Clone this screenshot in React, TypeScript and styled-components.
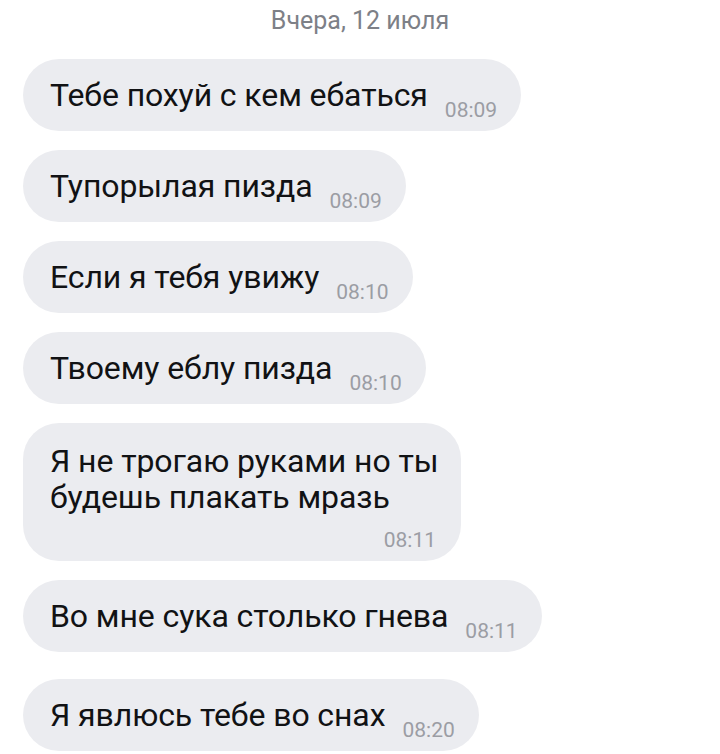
import React from 'react';
import styled, { createGlobalStyle } from 'styled-components';

type Message = {
    text: string
    time: string
    stacked?: boolean
    gapBefore?: number
}

const messages: Message[] = [
    { text: 'Тебе похуй с кем ебаться', time: '08:09' },
    { text: 'Тупорылая пизда', time: '08:09' },
    { text: 'Если я тебя увижу', time: '08:10' },
    { text: 'Твоему еблу пизда', time: '08:10' },
    { text: 'Я не трогаю руками но ты будешь плакать мразь', time: '08:11', stacked: true },
    { text: 'Во мне сука столько гнева', time: '08:11' },
    { text: 'Я явлюсь тебе во снах', time: '08:20', gapBefore: 27 },
];

const GlobalStyle = createGlobalStyle`
    html, body {
        margin: 0;
        padding: 0;
        background: #ffffff;
    }
    body {
        font-family: Roboto, "Noto Sans", sans-serif;
        -webkit-font-smoothing: antialiased;
    }
`

export default function App() {
    return (
        <>
            <GlobalStyle />
            <StyledChat>
                <DateLabel>Вчера, 12 июля</DateLabel>
                <StyledList>
                    {messages.map((m, i) => (
                        <Bubble key={i} $stacked={m.stacked} $gapBefore={m.gapBefore}>
                            <BubbleText $stacked={m.stacked}>{m.text}</BubbleText>
                            <Time $stacked={m.stacked}>{m.time}</Time>
                        </Bubble>
                    ))}
                </StyledList>
            </StyledChat>
        </>
    );
}

const StyledChat = styled.div`
    width: 720px;
    height: 754px;
    overflow: hidden;
    box-sizing: border-box;
    padding: 6px 0 0 23px;
    display: flex;
    flex-direction: column;
`

const DateLabel = styled.div`
    width: 674px;
    text-align: center;
    font-size: 25px;
    line-height: 30px;
    color: #7d8087;
    margin-bottom: 23px;
`

const StyledList = styled.div`
    display: flex;
    flex-direction: column;
    align-items: flex-start;
`

const Bubble = styled.div<{ $stacked?: boolean; $gapBefore?: number }>`
    box-sizing: border-box;
    display: flex;
    flex-direction: ${props => props.$stacked ? 'column' : 'row'};
    align-items: flex-start;
    height: ${props => props.$stacked ? 'auto' : '72px'};
    padding: ${props => props.$stacked ? '20px 20px 11px 27px' : '18px 24px 0 27px'};
    margin-top: ${props => props.$gapBefore ?? 19}px;
    border-radius: 36px;
    background-color: #ebecf0;

    &:first-child {
        margin-top: 0;
    }
`

const BubbleText = styled.div<{ $stacked?: boolean }>`
    font-size: 32px;
    line-height: 36px;
    letter-spacing: -0.1px;
    color: #111214;
    white-space: ${props => props.$stacked ? 'normal' : 'nowrap'};
    width: ${props => props.$stacked ? '391px' : 'auto'};
`

const Time = styled.span<{ $stacked?: boolean }>`
    font-size: 21px;
    line-height: 20px;
    color: #9b9da4;
    margin-left: ${props => props.$stacked ? '0' : '17px'};
    margin-top: ${props => props.$stacked ? '15px' : '23px'};
    margin-right: ${props => props.$stacked ? '5px' : '0'};
    align-self: ${props => props.$stacked ? 'flex-end' : 'flex-start'};
`
